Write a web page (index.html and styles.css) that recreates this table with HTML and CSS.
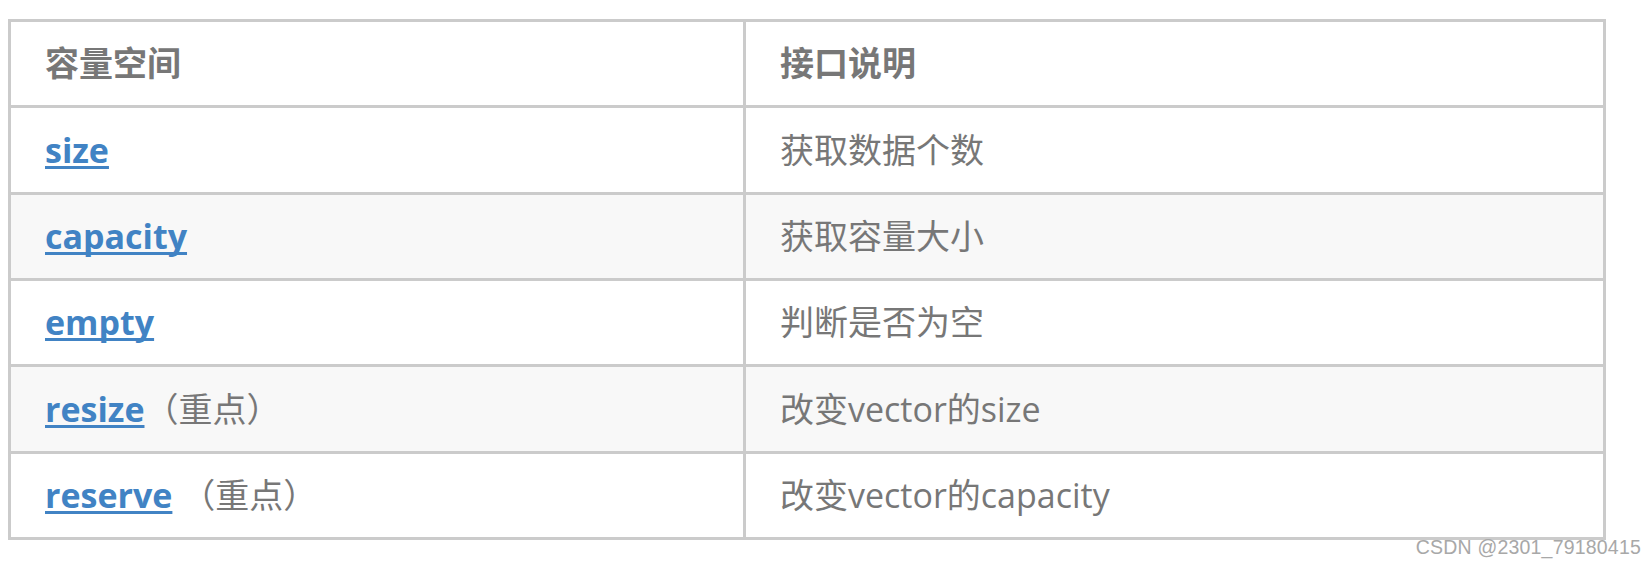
FILE: index.html
```html
<!DOCTYPE html>
<html lang="zh-CN">
<head>
<meta charset="utf-8">
<title>vector 容量空间</title>
<link rel="stylesheet" href="styles.css">
</head>
<body>
<div class="page">
  <table class="api">
    <colgroup><col class="c1"><col class="c2"></colgroup>
    <thead>
      <tr><th>容量空间</th><th>接口说明</th></tr>
    </thead>
    <tbody>
      <tr><td><a href="#">size</a></td><td>获取数据个数</td></tr>
      <tr><td><a href="#">capacity</a></td><td>获取容量大小</td></tr>
      <tr><td><a href="#">empty</a></td><td>判断是否为空</td></tr>
      <tr><td><a href="#">resize</a>（重点）</td><td>改变vector的size</td></tr>
      <tr><td><a href="#">reserve</a> （重点）</td><td>改变vector的capacity</td></tr>
    </tbody>
  </table>
  <div class="mark">CSDN @2301_79180415</div>
</div>
</body>
</html>
```
FILE: styles.css
```css
html, body {
  margin: 0;
  padding: 0;
  background: #ffffff;
}
.page {
  position: relative;
  padding: 19px 0 0 8px;
  width: 1638px;
  height: 547px;
}
.api {
  border-collapse: separate;
  border-spacing: 0;
  table-layout: fixed;
  width: 1598px;
  border-top: 3px solid #cbcbcb;
  border-left: 3px solid #cbcbcb;
  font-family: "Open Sans", "Noto Sans CJK SC", sans-serif;
  font-size: 34px;
  color: #777777;
}
.c1 { width: 735px; }
.c2 { width: 860px; }
.api th,
.api td {
  box-sizing: border-box;
  height: 86.33px;
  padding: 0 34px;
  border-right: 3px solid #cbcbcb;
  border-bottom: 3px solid #cbcbcb;
  text-align: left;
  vertical-align: middle;
  line-height: 1.2;
  white-space: nowrap;
}
.api th {
  font-weight: bold;
}
.api tbody tr:nth-child(2n) {
  background: #f8f8f8;
}
.api a {
  color: #4183c4;
  font-weight: bold;
  text-decoration: underline;
  text-decoration-thickness: 3px;
  text-underline-offset: 3px;
  text-decoration-skip-ink: none;
}
.mark {
  position: absolute;
  right: 5px;
  top: 536px;
  font-family: "Liberation Sans", Arial, sans-serif;
  font-size: 19.5px;
  color: #a8a8a8;
  letter-spacing: 0.2px;
}
```
